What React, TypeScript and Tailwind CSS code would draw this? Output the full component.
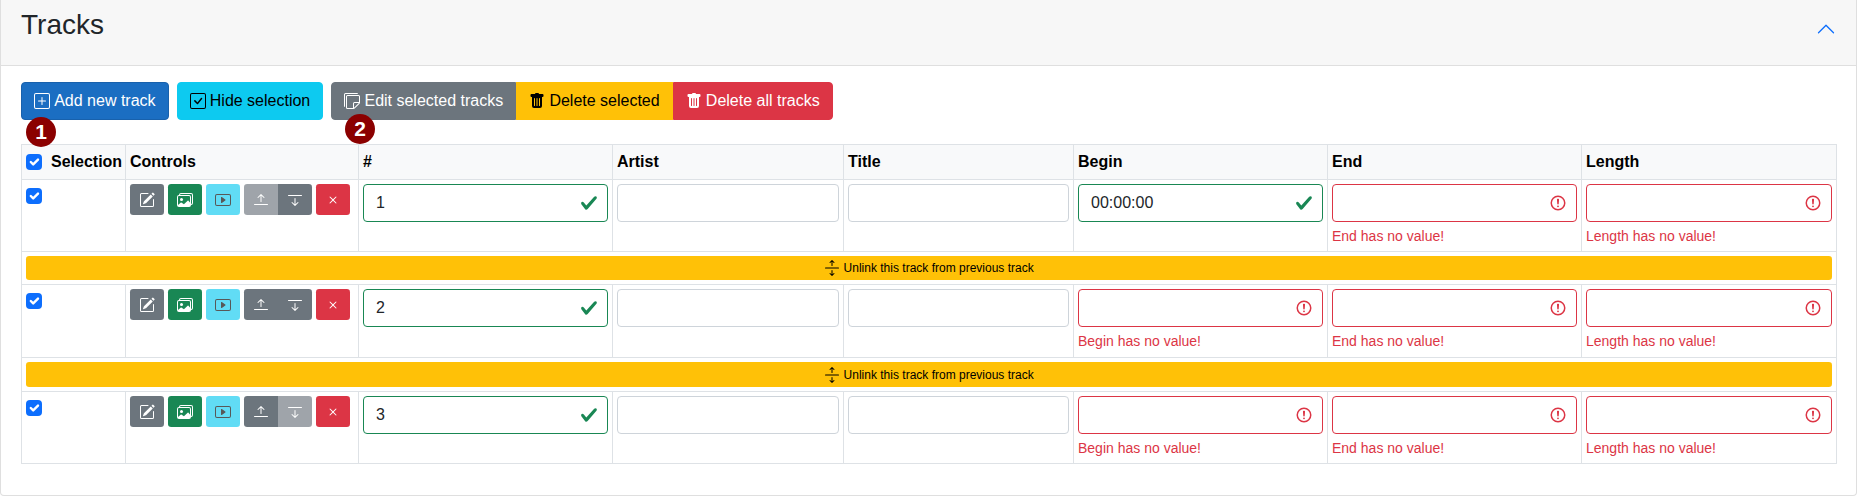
import { Fragment, ReactNode } from 'react';
import {
  BsArrowBarDown,
  BsArrowBarUp,
  BsArrowsExpand,
  BsCheckSquare,
  BsChevronUp,
  BsImages,
  BsPencilSquare,
  BsPlayBtn,
  BsPlusSquare,
  BsStickies,
  BsTrashFill,
  BsX
} from 'react-icons/bs';

interface ToolbarButtonProps {
  icon: ReactNode;
  label: string;
  className: string;
}

interface FieldProps {
  name: string;
  value?: string;
  state?: 'valid' | 'invalid';
}

interface TrackRow {
  number: string;
  begin?: string;
  upDisabled?: boolean;
  downDisabled?: boolean;
  rowClass: string;
}

const tracks: TrackRow[] = [
  { number: '1', begin: '00:00:00', upDisabled: true, rowClass: 'h-[72px]' },
  { number: '2', rowClass: 'h-[73px]' },
  { number: '3', downDisabled: true, rowClass: 'h-[72px]' }
];

const headers = ['Controls', '#', 'Artist', 'Title', 'Begin', 'End', 'Length'];

const ToolbarButton = ({ icon, label, className }: ToolbarButtonProps) => (
  <button className={`flex h-[38px] items-center gap-[4.2px] border px-3 text-base ${className}`}>
    {icon}
    <span>{label}</span>
  </button>
);

const Checkbox = () => (
  <span className="block h-4 w-4 rounded bg-[#0d6efd]">
    <svg viewBox="0 0 20 20" className="h-4 w-4">
      <path
        fill="none"
        stroke="#fff"
        strokeLinecap="round"
        strokeLinejoin="round"
        strokeWidth="3"
        d="m6 10 3 3 6-6"
      />
    </svg>
  </span>
);

const Badge = ({ value, className }: { value: string; className: string }) => (
  <span
    className={`absolute z-10 flex h-[30px] w-[30px] items-center justify-center rounded-full bg-[#8b0000] text-[21px] font-bold text-white ${className}`}
  >
    {value}
  </span>
);

const ControlButton = ({
  children,
  className
}: {
  children: ReactNode;
  className: string;
}) => (
  <button className={`flex h-[31px] w-[34px] items-center justify-center ${className}`}>
    {children}
  </button>
);

const Controls = ({ track }: { track: TrackRow }) => (
  <div className="flex gap-1">
    <ControlButton className="rounded-[3.2px] bg-[#6c757d] text-white">
      <BsPencilSquare size={16} />
    </ControlButton>
    <ControlButton className="rounded-[3.2px] bg-[#198754] text-white">
      <BsImages size={16} />
    </ControlButton>
    <ControlButton className="rounded-[3.2px] bg-[#0dcaf0] text-black opacity-65">
      <BsPlayBtn size={16} />
    </ControlButton>
    <div className="flex">
      <ControlButton
        className={`rounded-l-[3.2px] bg-[#6c757d] text-white ${track.upDisabled ? 'opacity-65' : ''}`}
      >
        <BsArrowBarUp size={16} />
      </ControlButton>
      <ControlButton
        className={`rounded-r-[3.2px] bg-[#6c757d] text-white ${track.downDisabled ? 'opacity-65' : ''}`}
      >
        <BsArrowBarDown size={16} />
      </ControlButton>
    </div>
    <ControlButton className="rounded-[3.2px] bg-[#dc3545] text-white">
      <BsX size={16} />
    </ControlButton>
  </div>
);

const Field = ({ name, value = '', state }: FieldProps) => {
  const borderColor =
    state === 'valid'
      ? 'border-[#198754]'
      : state === 'invalid'
        ? 'border-[#dc3545]'
        : 'border-[#ced4da]';

  return (
    <div>
      <div className="relative">
        <input
          readOnly
          value={value}
          className={`block h-[38px] w-full rounded border bg-white px-3 text-base text-[#212529] outline-none ${borderColor}`}
        />
        {state === 'valid' && (
          <svg viewBox="0 0 8 8" className="absolute top-[10px] right-[10px] h-[18px] w-[18px]">
            <path
              fill="#198754"
              d="M2.3 6.73.6 4.53c-.4-1.04.46-1.4 1.1-.8l1.1 1.4 3.4-3.8c.6-.63 1.6-.27 1.2.7l-4 4.6c-.43.5-.8.4-1.1.1z"
            />
          </svg>
        )}
        {state === 'invalid' && (
          <svg
            viewBox="0 0 12 12"
            fill="none"
            stroke="#dc3545"
            className="absolute top-[10px] right-[10px] h-[18px] w-[18px]"
          >
            <circle cx="6" cy="6" r="4.5" />
            <path strokeLinejoin="round" d="M5.8 3.6h.4L6 6.5z" />
            <circle cx="6" cy="8.2" r=".6" fill="#dc3545" stroke="none" />
          </svg>
        )}
      </div>
      {state === 'invalid' && (
        <div className="mt-1 text-sm leading-[21px] text-[#dc3545]">{name} has no value!</div>
      )}
    </div>
  );
};

const UnlinkRow = ({ barClass }: { barClass: string }) => (
  <tr>
    <td colSpan={8} className="border border-[#dee2e6] p-1">
      <button
        className={`flex w-full items-center justify-center gap-[3.3px] rounded-[3.2px] bg-[#ffc107] text-xs text-black ${barClass}`}
      >
        <BsArrowsExpand size={16} />
        <span>Unlink this track from previous track</span>
      </button>
    </td>
  </tr>
);

const App = () => {
  return (
    <div className="h-[503px] w-[1861px] overflow-hidden bg-white font-['Liberation_Sans',Arial,sans-serif] text-[#212529]">
      <div className="h-[496px] w-[1857px] rounded-b border-x border-b border-[#dfdfdf]">
        {/* Card header */}
        <div className="flex h-[66px] items-start justify-between border-b border-[#dfdfdf] bg-[#f7f7f7] px-5">
          <h3 className="mt-[8px] text-[28px] leading-[33.6px] font-normal">Tracks</h3>
          <BsChevronUp size={20} className="mt-[19px] text-[#0d6efd]" />
        </div>

        {/* Card body */}
        <div className="relative px-5 pt-4">
          <Badge value="1" className="top-[51px] left-[25px]" />
          <Badge value="2" className="top-[48px] left-[344px]" />

          {/* Toolbar */}
          <div className="mb-6 flex gap-2">
            <ToolbarButton
              icon={<BsPlusSquare size={16} />}
              label="Add new track"
              className="rounded border-[#1861ac] bg-[#1b6ec2] text-white"
            />
            <ToolbarButton
              icon={<BsCheckSquare size={16} />}
              label="Hide selection"
              className="rounded border-[#0dcaf0] bg-[#0dcaf0] text-black"
            />
            <div className="flex">
              <ToolbarButton
                icon={<BsStickies size={16} />}
                label="Edit selected tracks"
                className="rounded-l border-[#6c757d] bg-[#6c757d] text-white"
              />
              <ToolbarButton
                icon={<BsTrashFill size={16} />}
                label="Delete selected"
                className="border-[#ffc107] bg-[#ffc107] text-black"
              />
              <ToolbarButton
                icon={<BsTrashFill size={16} />}
                label="Delete all tracks"
                className="rounded-r border-[#dc3545] bg-[#dc3545] text-white"
              />
            </div>
          </div>

          {/* Tracks table */}
          <table className="w-[1815px] table-fixed text-base">
            <colgroup>
              <col className="w-[104px]" />
              <col className="w-[233px]" />
              <col className="w-[254px]" />
              <col className="w-[231px]" />
              <col className="w-[230px]" />
              <col className="w-[254px]" />
              <col className="w-[254px]" />
              <col className="w-[255px]" />
            </colgroup>
            <thead>
              <tr className="h-[35px] bg-[#f8f9fa] text-black">
                <th className="border border-[#dee2e6] px-1 text-left font-bold">
                  <div className="flex items-center gap-[9px]">
                    <Checkbox />
                    <span>Selection</span>
                  </div>
                </th>
                {headers.map((header) => (
                  <th key={header} className="border border-[#dee2e6] px-1 text-left font-bold">
                    {header}
                  </th>
                ))}
              </tr>
            </thead>
            <tbody>
              {tracks.map((track, index) => (
                <Fragment key={track.number}>
                  <tr className={track.rowClass}>
                    <td className="border border-[#dee2e6] p-1 pt-2 align-top">
                      <Checkbox />
                    </td>
                    <td className="border border-[#dee2e6] p-1 align-top">
                      <Controls track={track} />
                    </td>
                    <td className="border border-[#dee2e6] p-1 align-top">
                      <Field name="#" value={track.number} state="valid" />
                    </td>
                    <td className="border border-[#dee2e6] p-1 align-top">
                      <Field name="Artist" />
                    </td>
                    <td className="border border-[#dee2e6] p-1 align-top">
                      <Field name="Title" />
                    </td>
                    <td className="border border-[#dee2e6] p-1 align-top">
                      <Field
                        name="Begin"
                        value={track.begin}
                        state={track.begin ? 'valid' : 'invalid'}
                      />
                    </td>
                    <td className="border border-[#dee2e6] p-1 align-top">
                      <Field name="End" state="invalid" />
                    </td>
                    <td className="border border-[#dee2e6] p-1 align-top">
                      <Field name="Length" state="invalid" />
                    </td>
                  </tr>
                  {index < tracks.length - 1 && (
                    <UnlinkRow barClass={index === 0 ? 'h-6' : 'h-[25px]'} />
                  )}
                </Fragment>
              ))}
            </tbody>
          </table>
        </div>
      </div>
    </div>
  );
};

export default App;
